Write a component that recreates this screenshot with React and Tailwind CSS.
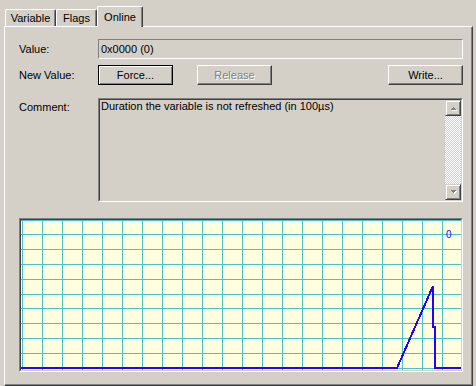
import React from "react";

function Tab({ label, w, selected }) {
  return (
    <div
      className={
        "flex items-center justify-center border-l border-t border-white border-r border-r-[#404040] shadow-[inset_-1px_0_0_#808080] rounded-tl-[2px] rounded-tr-[2px] bg-[#D4D0C8] " +
        (selected ? "h-[21px] mb-[-1px] relative z-10" : "h-[17px]")
      }
      style={{ width: w }}
    >
      <span className="leading-[13px]">{label}</span>
    </div>
  );
}

function Button({ children, variant }) {
  if (variant === "default") {
    return (
      <div className="w-[75px] h-[20px] border border-black shadow-[inset_1px_1px_0_#fff,inset_-1px_-1px_0_#808080] flex items-center justify-center">
        <span className="leading-[13px]">{children}</span>
      </div>
    );
  }
  return (
    <div className="w-[75px] h-[20px] border-l border-t border-white border-r border-b border-r-[#404040] border-b-[#404040] shadow-[inset_-1px_-1px_0_#808080] flex items-center justify-center">
      <span
        className={
          "leading-[13px] " +
          (variant === "disabled" ? "text-[#808080] [text-shadow:1px_1px_0_#fff]" : "")
        }
      >
        {children}
      </span>
    </div>
  );
}

function ScrollBtn({ dir }) {
  return (
    <div className="w-[16px] h-[16px] border-l border-t border-[#D4D0C8] border-r border-b border-r-[#404040] border-b-[#404040] shadow-[inset_1px_1px_0_#fff,inset_-1px_-1px_0_#808080] bg-[#D4D0C8] flex items-center justify-center">
      <svg width="7" height="5" viewBox="0 0 7 5" shapeRendering="crispEdges" className="overflow-visible">
        {dir === "up" ? (
          <>
            <path d="M1 5 L4 2 L7 5 Z" fill="#fff" />
            <path d="M0 4 L3 1 L6 4 Z" fill="#808080" />
          </>
        ) : (
          <>
            <path d="M1 1 L7 1 L4 4 Z" fill="#fff" />
            <path d="M0 0 L6 0 L3 3 Z" fill="#808080" />
          </>
        )}
      </svg>
    </div>
  );
}

function Sunken({ className, children }) {
  return (
    <div className={"border-l border-t border-l-[#808080] border-t-[#808080] border-r border-b border-r-white border-b-white " + className}>
      <div className="w-full h-full border-l border-t border-l-[#404040] border-t-[#404040] border-r border-b border-r-[#D4D0C8] border-b-[#D4D0C8]">
        {children}
      </div>
    </div>
  );
}

function Chart() {
  const vx = Array.from({ length: 22 }, (_, k) => 1 + 20 * k);
  const hy = [0, 14, 29, 44, 59, 74, 88, 103, 118, 133, 148];
  return (
    <Sunken className="w-[444px] h-[154px]">
      <svg width="440" height="150" viewBox="0 0 440 150" shapeRendering="crispEdges" className="block bg-[#FFFFE0]">
        {vx.map((x) => (
          <line key={"v" + x} x1={x + 0.5} y1="0" x2={x + 0.5} y2="150" stroke="#48C4C8" strokeWidth="1" />
        ))}
        {hy.map((y) => (
          <line key={"h" + y} x1="0" y1={y + 0.5} x2="440" y2={y + 0.5} stroke="#48C4C8" strokeWidth="1" />
        ))}
        <path
          d="M0 148 H376 L412 66 V107 H414 V148 H440"
          fill="none"
          stroke="#2800FF"
          strokeWidth="2"
          strokeLinejoin="miter"
        />
        <text x="425" y="18" fill="#2800FF" fontSize="10" fontFamily="'Liberation Sans', Arial, sans-serif">
          0
        </text>
      </svg>
    </Sunken>
  );
}

export default function App() {
  return (
    <div className="w-[476px] h-[386px] bg-[#D4D0C8] overflow-hidden text-[11px] text-black font-['Liberation_Sans',Arial,sans-serif]">
      <div className="h-[26px] flex items-end pl-[5px]">
        <Tab label="Variable" w={51} />
        <Tab label="Flags" w={41} />
        <Tab label="Online" w={46} selected />
      </div>
      <div className="ml-[4px] w-[469px] h-[360px] border-l border-t border-white border-r border-b border-r-[#404040] border-b-[#404040] shadow-[inset_-1px_-1px_0_#808080] pl-[14px] pt-[12px]">
        <div className="flex items-center">
          <div className="w-[79px] leading-[13px]">Value:</div>
          <div className="w-[365px] h-[20px] border-l border-t border-[#808080] border-r border-b border-r-white border-b-white pl-[2px] flex items-center">
            <span className="leading-[13px]">0x0000 (0)</span>
          </div>
        </div>
        <div className="flex items-center mt-[6px]">
          <div className="w-[79px] leading-[13px]">New Value:</div>
          <div className="w-[365px] flex">
            <Button variant="default">Force...</Button>
            <div className="ml-[24px]">
              <Button variant="disabled">Release</Button>
            </div>
            <div className="ml-auto">
              <Button>Write...</Button>
            </div>
          </div>
        </div>
        <div className="flex items-start mt-[13px]">
          <div className="w-[79px] leading-[13px] mt-[3px]">Comment:</div>
          <Sunken className="w-[365px] h-[104px]">
            <div className="flex h-full">
              <div className="flex-1 pl-[1px] leading-[13px]">
                Duration the variable is not refreshed (in 100µs)
              </div>
              <div className="w-[16px] flex flex-col">
                <ScrollBtn dir="up" />
                <div className="flex-1 bg-[image:repeating-conic-gradient(#ffffff_0%_25%,#D4D0C8_0%_50%)] bg-[length:2px_2px]" />
                <ScrollBtn dir="down" />
              </div>
            </div>
          </Sunken>
        </div>
        <div className="mt-[16px]">
          <Chart />
        </div>
      </div>
    </div>
  );
}
